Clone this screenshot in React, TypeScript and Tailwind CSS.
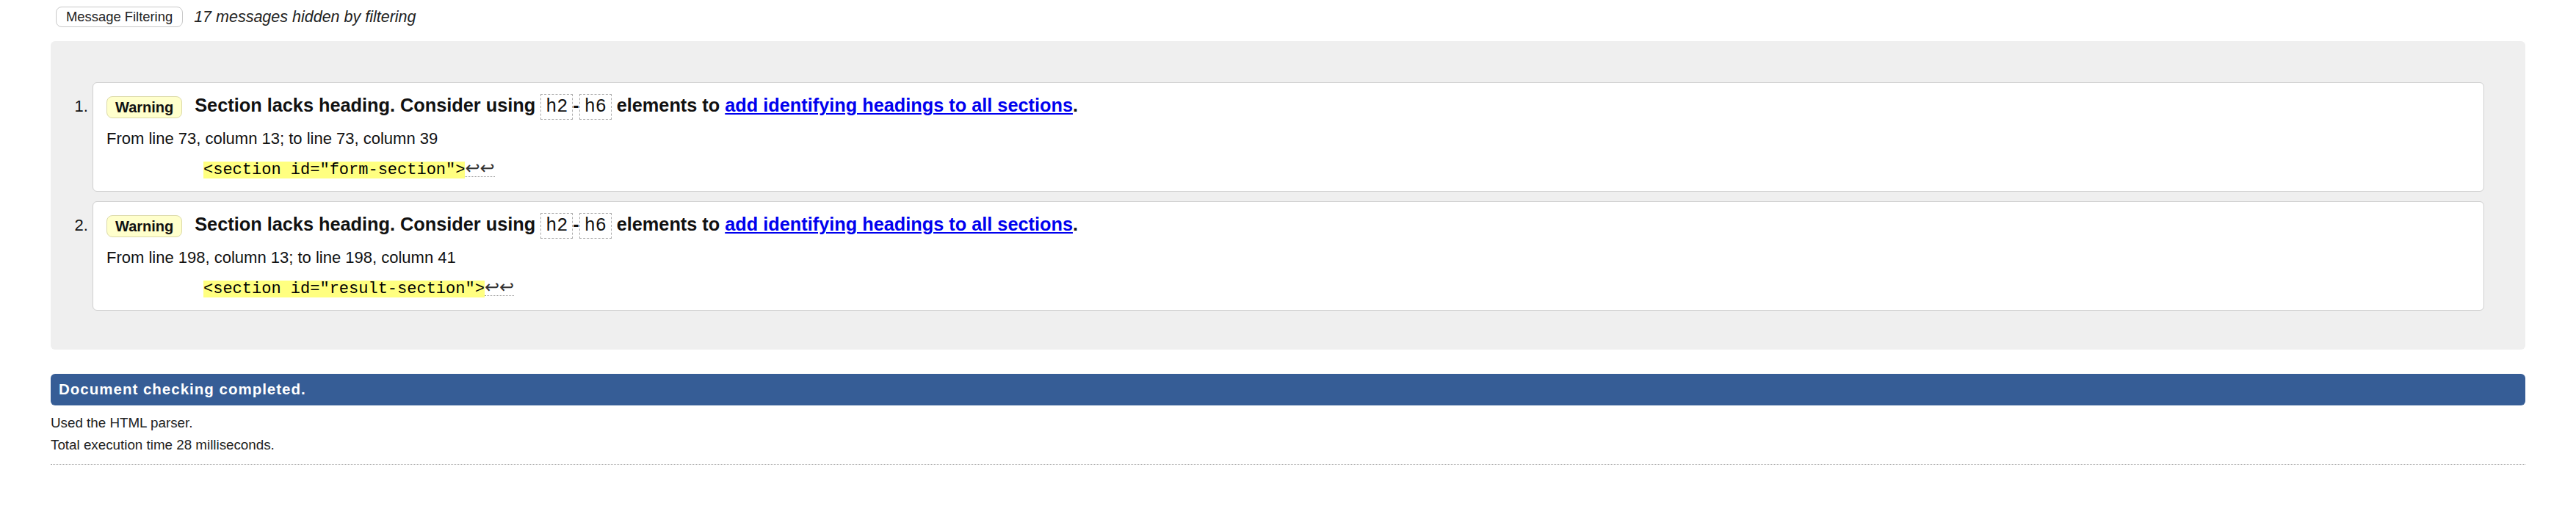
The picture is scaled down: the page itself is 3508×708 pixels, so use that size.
import React from "react";

const sans = "font-['Liberation_Sans',Arial,sans-serif]";
const mono = "font-['Liberation_Mono','Courier_New',monospace]";

type Msg = { from: string; extract: string };

const messages: Msg[] = [
  { from: "From line 73, column 13; to line 73, column 39", extract: '<section id="form-section">' },
  { from: "From line 198, column 13; to line 198, column 41", extract: '<section id="result-section">' },
];

function Code({ children }: { children: React.ReactNode }) {
  return (
    <code
      className={`${mono} inline-block align-middle border border-dashed border-[#aaa] px-[6px] text-[25px] font-normal leading-[33px] text-[#111]`}
    >
      {children}
    </code>
  );
}

function Message({ m }: { m: Msg }) {
  return (
    <li className="rounded-[6px] border border-[#cfcfcf] bg-white pt-[15px] pb-[17px] pl-[18px] pr-4 text-[22px] text-[#111]">
      <p className="text-[25.3px] font-bold leading-[30px] text-[#111]">
        <span className="mr-[17px] inline-block align-middle rounded-[8px] border border-[#dcdaa8] bg-[#ffffcc] px-[11px] text-[20px] leading-[28px]">
          Warning
        </span>
        Section lacks heading. Consider using <Code>h2</Code>-<Code>h6</Code> elements to{" "}
        <a href="#" className="text-[#0000ee] underline">
          add identifying headings to all sections
        </a>
        .
      </p>
      <p className="mt-[11px] leading-[30px]">{m.from}</p>
      <p className={`${mono} mt-[14px] ml-[132px] text-[22px] leading-[23px]`}>
        <span className="inline-block bg-[#ffff80] text-black">{m.extract}</span>
        <span className="inline-block border-b border-dotted border-[#999] font-['DejaVu_Sans',sans-serif] text-[24px] leading-[22px] text-[#333]">
          ↩↩
        </span>
      </p>
    </li>
  );
}

export default function App() {
  return (
    <div className={`${sans} min-h-[708px] bg-white px-[69px] text-[#222]`}>
      <div className="flex h-[46px] items-center gap-[15px] pl-[7px]">
        <button className="h-[28px] rounded-[8px] border border-[#c8c8c8] bg-white px-[13px] text-[18.4px] leading-none text-[#222]">
          Message Filtering
        </button>
        <span className="text-[21.5px] italic">17 messages hidden by filtering</span>
      </div>

      <div className="mt-[10px] rounded-[6px] bg-[#efefef] pt-[56px] pb-[53px] pl-[57px] pr-[56px]">
        <ol className="list-decimal space-y-[13px]">
          {messages.map((m, i) => (
            <Message key={i} m={m} />
          ))}
        </ol>
      </div>

      <div className="mt-[33px] flex h-[43px] items-center rounded-[6px] bg-[#365d96] px-[11px] text-[20.5px] font-bold tracking-[1px] text-white">
        Document checking completed.
      </div>
      <p className="mt-[9px] text-[18.8px] leading-[30px]">Used the HTML parser.</p>
      <p className="text-[18.8px] leading-[30px]">Total execution time 28 milliseconds.</p>
      <div className="mt-[11px] border-t border-dotted border-[#aaa]" />
    </div>
  );
}
